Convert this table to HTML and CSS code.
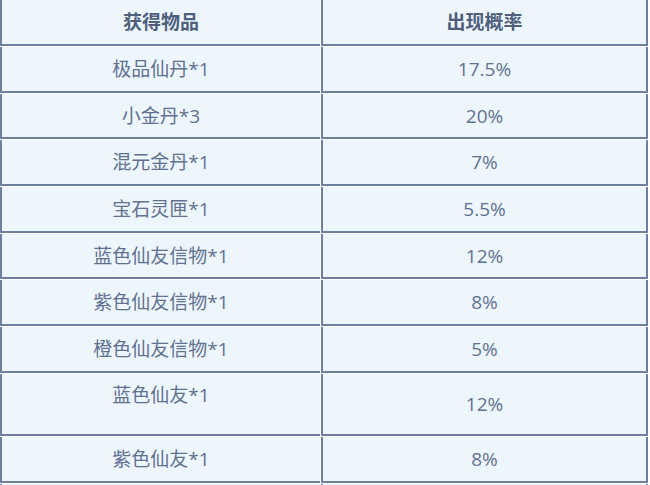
FILE: index.html
```html
<!DOCTYPE html>
<html lang="zh">
<head>
<meta charset="utf-8">
<link rel="stylesheet" href="styles.css">
</head>
<body>
<table class="drop-table">
  <colgroup><col class="col-name"><col class="col-rate"></colgroup>
  <thead>
    <tr><th>获得物品</th><th>出现概率</th></tr>
  </thead>
  <tbody>
    <tr><td>极品仙丹*1</td><td>17.5%</td></tr>
    <tr><td>小金丹*3</td><td>20%</td></tr>
    <tr><td>混元金丹*1</td><td>7%</td></tr>
    <tr><td>宝石灵匣*1</td><td>5.5%</td></tr>
    <tr><td>蓝色仙友信物*1</td><td>12%</td></tr>
    <tr><td>紫色仙友信物*1</td><td>8%</td></tr>
    <tr><td>橙色仙友信物*1</td><td>5%</td></tr>
    <tr class="tall"><td><div class="name">蓝色仙友*1</div><div class="spacer"></div></td><td>12%</td></tr>
    <tr><td>紫色仙友*1</td><td>8%</td></tr>
    <tr class="next"><td></td><td></td></tr>
  </tbody>
</table>
</body>
</html>
```
FILE: styles.css
```css
html, body {
  margin: 0;
  padding: 0;
  background: #ffffff;
}

.drop-table {
  width: 650px;
  border-collapse: separate;
  border-spacing: 1px;
  margin: -1px 0 0 -1px;
  font-family: "Open Sans", "Noto Sans CJK SC", sans-serif;
  font-size: 19px;
  color: #617190;
  table-layout: fixed;
}

.col-name {
  width: 320px;
}

.drop-table th,
.drop-table td {
  background: #eef6fd;
  border-left: 2px solid #6d7f9e;
  border-bottom: 2px solid #6d7f9e;
  text-align: center;
  vertical-align: middle;
  box-sizing: border-box;
  height: 45.7px;
  padding: 0 8px;
  line-height: 24px;
}

.drop-table th:last-child,
.drop-table td:last-child {
  border-right: 2px solid #6d7f9e;
}

.drop-table th {
  font-weight: 700;
  color: #4f5f7c;
  height: 46px;
}

.drop-table tr.tall td {
  height: 62px;
}

.drop-table tr.tall td:first-child {
  vertical-align: top;
  padding-top: 9px;
}

.spacer {
  height: 16px;
}
```
